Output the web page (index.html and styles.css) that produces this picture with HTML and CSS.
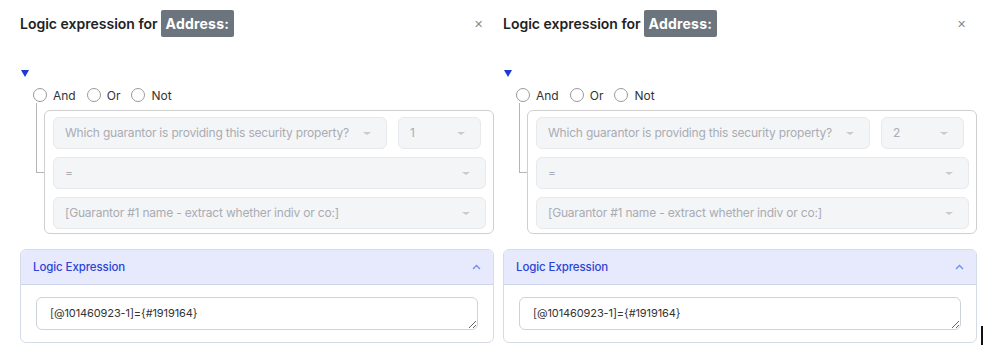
FILE: index.html
```html
<!DOCTYPE html>
<html lang="en">
<head>
  <meta charset="UTF-8">
  <title>Logic expression</title>
  <link rel="stylesheet" href="styles.css">
</head>
<body>
  <div class="panneaux">
    <div class="panneau">
      <div class="entete">
        <h2>Logic expression for <span class="badge">Address:</span></h2>
        <span class="fermer">&#x2715;</span>
      </div>
      <div class="fleche"></div>
      <div class="choix">
        <label><span class="rond"></span>And</label>
        <label><span class="rond"></span>Or</label>
        <label><span class="rond"></span>Not</label>
      </div>
      <div class="groupe">
        <div class="trait"></div>
        <div class="boite">
          <div class="ligne ligne-courte">
            <div class="liste large">Which guarantor is providing this security property?<span class="caret"></span></div>
            <div class="liste petite">1<span class="caret"></span></div>
          </div>
          <div class="ligne">
            <div class="liste large">=<span class="caret"></span></div>
          </div>
          <div class="ligne">
            <div class="liste large">[Guarantor #1 name - extract whether indiv or co:]<span class="caret"></span></div>
          </div>
        </div>
      </div>
      <div class="accordeon">
        <div class="accordeon-titre">Logic Expression
          <svg width="9" height="6" viewBox="0 0 9 6"><path d="M1 5 L4.5 1.5 L8 5" fill="none" stroke="#6b8cf0" stroke-width="1.3"/></svg>
        </div>
        <div class="accordeon-corps">
          <textarea class="expression">[@101460923-1]={#1919164}</textarea>
        </div>
      </div>
    </div>

    <div class="panneau">
      <div class="entete">
        <h2>Logic expression for <span class="badge">Address:</span></h2>
        <span class="fermer">&#x2715;</span>
      </div>
      <div class="fleche"></div>
      <div class="choix">
        <label><span class="rond"></span>And</label>
        <label><span class="rond"></span>Or</label>
        <label><span class="rond"></span>Not</label>
      </div>
      <div class="groupe">
        <div class="trait"></div>
        <div class="boite">
          <div class="ligne ligne-courte">
            <div class="liste large">Which guarantor is providing this security property?<span class="caret"></span></div>
            <div class="liste petite">2<span class="caret"></span></div>
          </div>
          <div class="ligne">
            <div class="liste large">=<span class="caret"></span></div>
          </div>
          <div class="ligne">
            <div class="liste large">[Guarantor #1 name - extract whether indiv or co:]<span class="caret"></span></div>
          </div>
        </div>
      </div>
      <div class="accordeon">
        <div class="accordeon-titre">Logic Expression
          <svg width="9" height="6" viewBox="0 0 9 6"><path d="M1 5 L4.5 1.5 L8 5" fill="none" stroke="#6b8cf0" stroke-width="1.3"/></svg>
        </div>
        <div class="accordeon-corps">
          <textarea class="expression">[@101460923-1]={#1919164}</textarea>
        </div>
      </div>
    </div>
  </div>
  <div class="curseur"></div>
</body>
</html>
```

FILE: styles.css
```css
body {
  margin: 0;
  font-family: Inter, "Open Sans", sans-serif;
  background-color: white;
  color: #222;
}

.panneaux {
  display: grid;
  grid-template-columns: 483px 500px;
}

.panneau {
  padding: 10px 0 0 20px;
  width: 474px;
}

.entete {
  display: flex;
  justify-content: space-between;
  align-items: center;
  height: 27px;
  width: 463px;
}

.entete h2 {
  margin: 0;
  font-size: 14px;
  font-weight: 600;
  display: flex;
  align-items: center;
  gap: 3px;
}

.badge {
  background-color: #6c757d;
  color: white;
  padding: 0 5px;
  height: 27px;
  line-height: 27px;
  border-radius: 2px;
  font-weight: 700;
  letter-spacing: 0.2px;
}

.fermer {
  color: #8a8a8a;
  font-size: 11px;
  margin-top: 1px;
}

.fleche {
  margin: 33px 0 0 1px;
  width: 0;
  height: 0;
  border-left: 4px solid transparent;
  border-right: 4px solid transparent;
  border-top: 7px solid #1b38d8;
}

.choix {
  display: flex;
  gap: 11px;
  margin: 11px 0 0 13px;
  font-size: 12px;
  color: #333;
  height: 14px;
  align-items: center;
}

.choix label {
  display: flex;
  align-items: center;
  gap: 6px;
}

.rond {
  width: 12px;
  height: 12px;
  border: 1px solid #9a9a9a;
  border-radius: 50%;
}

.groupe {
  display: flex;
  margin-top: 8px;
}

.trait {
  width: 7px;
  height: 69px;
  margin: -7px 0 0 16px;
  border-left: 1px solid #b5b5b5;
  border-bottom: 1px solid #b5b5b5;
}

.boite {
  width: 434px;
  border: 1px solid #cfcfcf;
  border-radius: 6px;
  padding: 6px 7px 4px 8px;
  display: flex;
  flex-direction: column;
  gap: 8px;
}

.ligne {
  display: flex;
  gap: 11px;
}

.ligne-courte {
  margin-right: 5px;
}

.liste {
  position: relative;
  height: 32px;
  line-height: 29px;
  box-sizing: border-box;
  background-color: #f4f5f7;
  border: 1px solid #e8e9ed;
  border-radius: 6px;
  padding-left: 11px;
  font-size: 12px;
  letter-spacing: -0.2px;
  color: #a9acb3;
  white-space: nowrap;
}

.large {
  flex: 1;
}

.petite {
  width: 83px;
}

.caret {
  position: absolute;
  right: 15px;
  top: 14px;
  border-left: 4px solid transparent;
  border-right: 4px solid transparent;
  border-top: 3px solid #c8cace;
}

.accordeon {
  margin-top: 15px;
  border: 1px solid #d5dbe7;
  border-radius: 6px;
  overflow: hidden;
}

.accordeon-titre {
  height: 34px;
  background-color: #e7eafc;
  border-bottom: 1px solid #cdd3ea;
  display: flex;
  justify-content: space-between;
  align-items: center;
  padding: 0 12px 0 12px;
  font-size: 11.5px;
  font-weight: 500;
  letter-spacing: -0.1px;
  color: #2c44d6;
}

.accordeon-corps {
  padding: 12px 15px 12px 15px;
}

.expression {
  display: block;
  width: 100%;
  height: 33px;
  box-sizing: border-box;
  border: 1px solid #cdd3dd;
  border-radius: 6px;
  padding: 8px 13px;
  font-family: Inter, "Open Sans", sans-serif;
  font-size: 11px;
  letter-spacing: -0.1px;
  color: #333;
}

.curseur {
  position: absolute;
  left: 981px;
  top: 326px;
  width: 2px;
  height: 19px;
  background-color: #111;
}
```
